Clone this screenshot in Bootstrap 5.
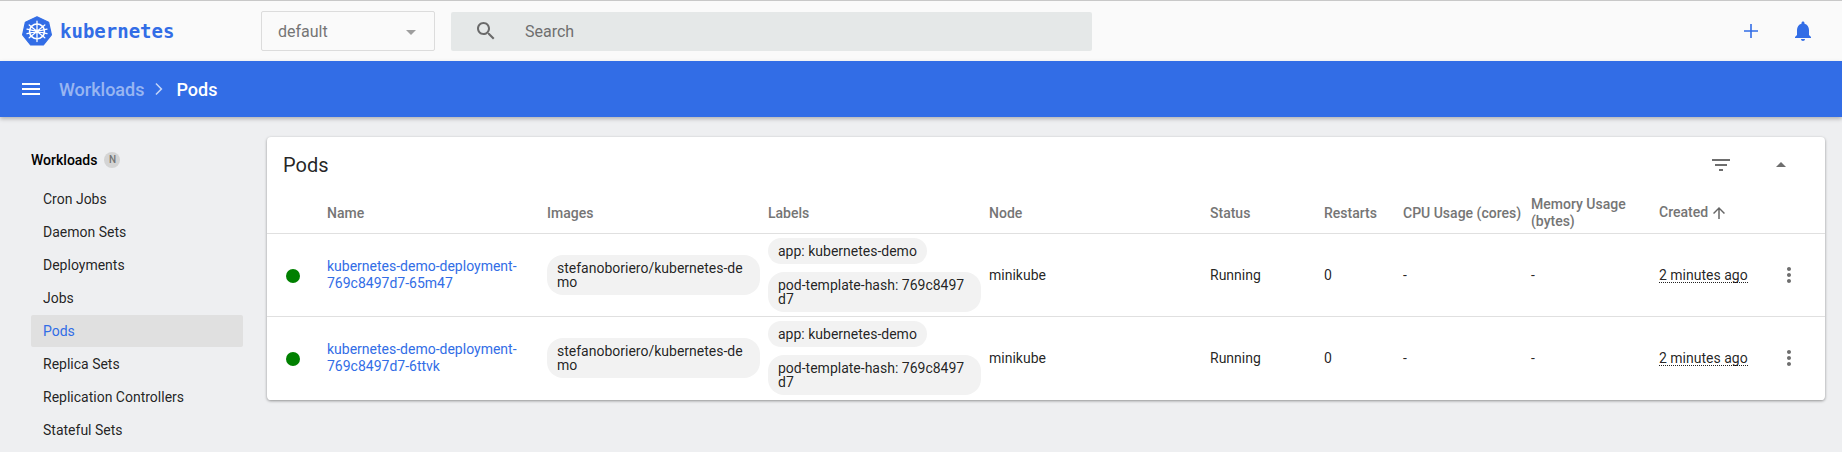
<!DOCTYPE html>
<html lang="en">
<head>
<meta charset="utf-8">
<title>Pods - Kubernetes Dashboard</title>
<link rel="stylesheet" href="https://cdn.jsdelivr.net/npm/bootstrap@5.3.0/dist/css/bootstrap.min.css">
<style>
html,body{height:100%}
body{background:#eeeff1;font-family:Roboto,"Liberation Sans",sans-serif;font-size:14px;color:rgba(0,0,0,.87);overflow:hidden}
svg{display:block;flex:none;fill:currentColor}
.kd-top{height:61px;background:#fafafa;border-top:1px solid #c8c8c8;padding-left:22px;padding-right:27px}
.kd-logo{width:174px;flex:none;gap:8px;color:#326de6}
.kd-logo-text{font-family:"DejaVu Sans Mono",monospace;font-size:19px;font-weight:700;letter-spacing:0}
.kd-ns{width:174px;height:40px;margin-left:65px;background:#fafafa;border:1px solid #dcdcdc;border-radius:2px;padding:2px 18px 0 16px;font-size:16px;color:#757575}
.kd-caret{width:0;height:0;border-left:5px solid transparent;border-right:5px solid transparent;border-top:5px solid #9e9e9e}
.kd-search{width:641px;height:39px;margin-left:16px;background:#e5e8e8;border-radius:2px;padding-left:23px;font-size:16px;color:#6f6f6f;gap:27px}
.kd-search svg{color:#6a6a6a}
.kd-search span{padding-top:1px}
.kd-tools{gap:28px;color:#326de6}
.kd-bar{height:56px;background:#326de6;color:#fff;padding-left:19px;font-size:18px;font-weight:500;box-shadow:0 2px 4px rgba(0,0,0,.25);position:relative}
.kd-crumb{margin-left:16px;color:rgba(255,255,255,.5)}
.kd-sep{color:rgba(255,255,255,.7);margin:0 5px 0 3px}
.kd-side{width:267px;flex:none;padding:27px 24px 0 31px}
.kd-side-head{height:32px;font-weight:500;color:#000;margin-bottom:7px;gap:7px}
.kd-ns-tag{width:16px;height:16px;border-radius:50%;background:#d4d4d4;color:#757575;font-size:10px;line-height:16px;text-align:center}
.kd-side-link{height:32px;margin-bottom:1px;padding:0 12px;border-radius:2px;color:rgba(0,0,0,.87);text-decoration:none;line-height:32px}
.kd-side-link.kd-on{background:#e0e0e0;color:#326de6}
.kd-main{padding:20px 17px 0 0;min-width:0}
.kd-card{border:0;border-radius:4px;background:#fff;box-shadow:0 1px 3px rgba(0,0,0,.4);overflow:hidden}
.kd-card-head{height:56px;padding:0 32px 0 16px;color:#6e6e6e}
.kd-card-title{font-size:20px;font-weight:400;margin:0;color:rgba(0,0,0,.87)}
.kd-head-tools{gap:36px}
.pods-table{table-layout:fixed;width:100%;line-height:17px;border-collapse:separate;border-spacing:0;--bs-table-color:rgba(0,0,0,.87);--bs-table-bg:transparent}
.pods-table.table>:not(caption)>*>*{padding:0 8px 0 0;border-bottom:1px solid #e0e0e0;box-shadow:none;vertical-align:middle}
.pods-table.table>thead>tr>th{height:41px;font-weight:500;color:#757575}
.pods-table.table>tbody>tr>td.kd-cell-chips{padding-top:4px;padding-bottom:4px}
.pods-table.table>tbody>tr:last-child>td{border-bottom-color:#fff}
.c-dot{width:60px}.c-name{width:220px}.c-img{width:221px}.c-lab{width:221px}.c-node{width:221px}.c-status{width:114px}.c-rest{width:79px}.c-cpu{width:128px}.c-mem{width:128px}.c-created{width:110px}
.kd-dot{width:14px;height:14px;border-radius:50%;background:#008000;margin:1px 0 0 19px}
.kd-link{color:#326de6;text-decoration:none}
.kd-chip{display:block;width:fit-content;max-width:100%;background:#f2f2f2;border-radius:16px;padding:6px 10px;line-height:14px;word-break:break-all}
.kd-chip+.kd-chip{margin-top:8px}
.kd-age{border-bottom:1px dotted #222;display:inline-block;line-height:13px}
.kd-sort{display:inline-block;vertical-align:-5px;margin-left:2px;color:#666}
.kd-kebab{color:#6e6e6e;margin-left:8px}
</style>
</head>
<body class="d-flex flex-column">
<header class="kd-top d-flex align-items-center flex-shrink-0">
  <div class="kd-logo d-flex align-items-center">
    <svg width="30" height="30" viewBox="0 0 30 30" aria-hidden="true">
      <path d="M15 .8 26.600 6.200 29.400 18.800 21.400 29H8.600L.6 18.800 3.400 6.200Z" fill="#326de6" stroke="#326de6" stroke-width="1.200" stroke-linejoin="round"/>
      <g fill="none" stroke="#fff" stroke-linecap="round">
        <circle cx="15" cy="15.400" r="7.400" stroke-width="1.600"/>
        <path stroke-width="1.300" d="M15 5.200V25.600M7.200 9 22.800 21.800M22.800 9 7.200 21.800M5 17.600 25 13.200M25 17.600 5 13.200"/>
      </g>
      <circle cx="15" cy="15.400" r="1.900" fill="#fff"/>
    </svg>
    <span class="kd-logo-text">kubernetes</span>
  </div>
  <div class="kd-ns d-flex align-items-center justify-content-between">
    <span>default</span><span class="kd-caret"></span>
  </div>
  <div class="kd-search d-flex align-items-center">
    <svg width="24" height="24" viewBox="0 0 24 24"><path d="M15.500 14h-.79l-.28-.27C15.410 12.590 16 11.110 16 9.500 16 5.910 13.090 3 9.500 3S3 5.910 3 9.500 5.910 16 9.500 16c1.610 0 3.090-.59 4.230-1.570l.27.28v.79l5 4.990L20.490 19l-4.990-5zm-6 0C7.010 14 5 11.990 5 9.500S7.010 5 9.500 5 14 7.010 14 9.500 11.990 14 9.500 14z"/></svg>
    <span>Search</span>
  </div>
  <div class="kd-tools d-flex align-items-center ms-auto">
    <svg width="24" height="24" viewBox="0 0 24 24"><path d="M19 12.800h-6.200V19h-1.600v-6.200H5v-1.600h6.200V5h1.600v6.200H19z"/></svg>
    <svg width="24" height="24" viewBox="0 0 24 24"><path d="M12 22c1.100 0 2-.9 2-2h-4c0 1.100.89 2 2 2zm6-6v-5c0-3.070-1.640-5.640-4.500-6.320V4c0-.83-.67-1.500-1.500-1.500s-1.500.67-1.500 1.500v.68C7.630 5.360 6 7.920 6 11v5l-2 2v1h16v-1l-2-2z"/></svg>
  </div>
</header>
<div class="kd-bar d-flex align-items-center flex-shrink-0">
  <svg width="24" height="24" viewBox="0 0 24 24"><path d="M3 18h18v-2H3v2zm0-5h18v-2H3v2zm0-7v2h18V6H3z"/></svg>
  <span class="kd-crumb">Workloads</span>
  <svg class="kd-sep" width="24" height="24" viewBox="0 0 24 24"><path d="M9.500 6 8.400 7.100 13.300 12l-4.900 4.900L9.500 18l6-6z"/></svg>
  <span>Pods</span>
</div>
<div class="d-flex flex-grow-1 overflow-hidden">
  <nav class="kd-side">
    <div class="kd-side-head d-flex align-items-center"><span>Workloads</span><span class="kd-ns-tag">N</span></div>
    <a class="kd-side-link d-block" href="#">Cron Jobs</a>
    <a class="kd-side-link d-block" href="#">Daemon Sets</a>
    <a class="kd-side-link d-block" href="#">Deployments</a>
    <a class="kd-side-link d-block" href="#">Jobs</a>
    <a class="kd-side-link d-block kd-on" href="#">Pods</a>
    <a class="kd-side-link d-block" href="#">Replica Sets</a>
    <a class="kd-side-link d-block" href="#">Replication Controllers</a>
    <a class="kd-side-link d-block" href="#">Stateful Sets</a>
  </nav>
  <main class="kd-main flex-grow-1">
    <section class="card kd-card">
      <div class="kd-card-head d-flex align-items-center justify-content-between">
        <h2 class="kd-card-title">Pods</h2>
        <div class="kd-head-tools d-flex">
          <svg width="24" height="24" viewBox="0 0 24 24"><path d="M10 18h4v-2h-4v2zM3 6v2h18V6H3zm3 7h12v-2H6v2z"/></svg>
          <svg width="24" height="24" viewBox="0 0 24 24"><path d="M7 14l5-5 5 5z"/></svg>
        </div>
      </div>
      <table class="table mb-0 pods-table">
        <colgroup><col class="c-dot"><col class="c-name"><col class="c-img"><col class="c-lab"><col class="c-node"><col class="c-status"><col class="c-rest"><col class="c-cpu"><col class="c-mem"><col class="c-created"><col></colgroup>
        <thead>
          <tr>
            <th></th><th>Name</th><th>Images</th><th>Labels</th><th>Node</th><th>Status</th><th>Restarts</th><th>CPU Usage (cores)</th><th>Memory Usage (bytes)</th>
            <th>Created<svg class="kd-sort" width="18" height="18" viewBox="0 0 24 24"><path d="M4 12l1.410 1.410L11 7.830V20h2V7.830l5.580 5.590L20 12l-8-8-8 8z"/></svg></th><th></th>
          </tr>
        </thead>
        <tbody>
          <tr>
            <td><div class="kd-dot"></div></td>
            <td><a class="kd-link" href="#">kubernetes-demo-deployment-769c8497d7-65m47</a></td>
            <td class="kd-cell-chips"><span class="kd-chip">stefanoboriero/kubernetes-demo</span></td>
            <td class="kd-cell-chips"><span class="kd-chip">app: kubernetes-demo</span><span class="kd-chip">pod-template-hash: 769c8497d7</span></td>
            <td>minikube</td><td>Running</td><td>0</td><td>-</td><td>-</td>
            <td><span class="kd-age">2 minutes ago</span></td>
            <td><svg class="kd-kebab" width="24" height="24" viewBox="0 0 24 24"><path d="M12 8c1.100 0 2-.9 2-2s-.9-2-2-2-2 .9-2 2 .9 2 2 2zm0 2c-1.100 0-2 .9-2 2s.9 2 2 2 2-.9 2-2-.9-2-2-2zm0 6c-1.100 0-2 .9-2 2s.9 2 2 2 2-.9 2-2-.9-2-2-2z"/></svg></td>
          </tr>
          <tr>
            <td><div class="kd-dot"></div></td>
            <td><a class="kd-link" href="#">kubernetes-demo-deployment-769c8497d7-6ttvk</a></td>
            <td class="kd-cell-chips"><span class="kd-chip">stefanoboriero/kubernetes-demo</span></td>
            <td class="kd-cell-chips"><span class="kd-chip">app: kubernetes-demo</span><span class="kd-chip">pod-template-hash: 769c8497d7</span></td>
            <td>minikube</td><td>Running</td><td>0</td><td>-</td><td>-</td>
            <td><span class="kd-age">2 minutes ago</span></td>
            <td><svg class="kd-kebab" width="24" height="24" viewBox="0 0 24 24"><path d="M12 8c1.100 0 2-.9 2-2s-.9-2-2-2-2 .9-2 2 .9 2 2 2zm0 2c-1.100 0-2 .9-2 2s.9 2 2 2 2-.9 2-2-.9-2-2-2zm0 6c-1.100 0-2 .9-2 2s.9 2 2 2 2-.9 2-2-.9-2-2-2z"/></svg></td>
          </tr>
        </tbody>
      </table>
    </section>
  </main>
</div>
<script src="https://cdn.jsdelivr.net/npm/bootstrap@5.3.0/dist/js/bootstrap.bundle.min.js"></script>
</body>
</html>
